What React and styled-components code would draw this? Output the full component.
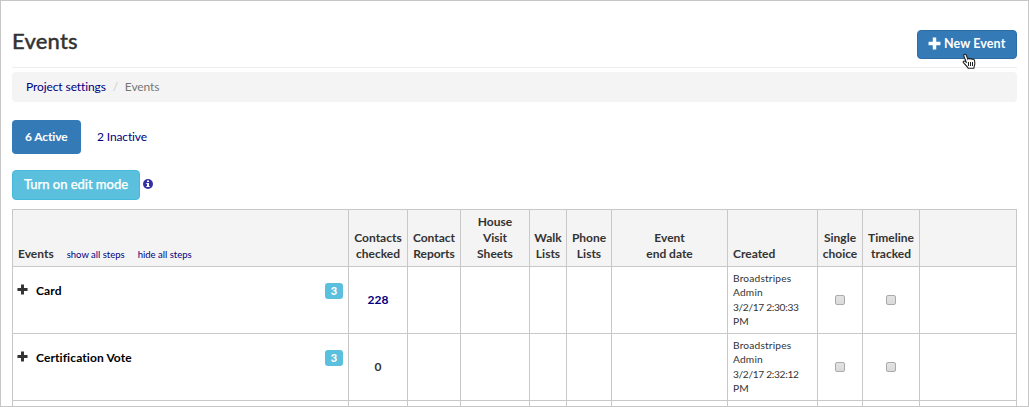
import React from "react";
import styled, { createGlobalStyle } from "styled-components";

const Global = createGlobalStyle`
  *, *::before, *::after { box-sizing: border-box; }
  html, body { margin: 0; height: 407px; overflow: hidden; background: #fff; }
  body { font-family: Lato, "Liberation Sans", sans-serif; font-size: 12px; color: #333; }
`;

const Frame = styled.div`
  width: 1029px;
  height: 407px;
  border: 1px solid #c6c6c6;
  padding: 0 11px;
  overflow: hidden;
`;

const Header = styled.header`
  display: flex;
  justify-content: space-between;
  align-items: flex-start;
  height: 67px;
  padding-top: 29px;
  border-bottom: 1px solid #eee;
`;

const Title = styled.h1`
  margin: -2px 0 0;
  font-size: 22px;
  line-height: 26px;
  font-weight: 500;
  letter-spacing: 0.2px;
  -webkit-text-stroke: 0.35px currentColor;
`;

const NewButton = styled.button`
  position: relative;
  display: flex;
  align-items: center;
  gap: 3px;
  width: 100px;
  height: 29px;
  padding: 0 0 2px 10px;
  border: 1px solid #2e6da4;
  border-radius: 4px;
  background: #337ab7;
  color: #fff;
  font: 700 12.5px/18px Lato, sans-serif;
  letter-spacing: 0.1px;
  white-space: nowrap;
`;

const Pointer = styled.svg`
  position: absolute;
  left: 44px;
  top: 22px;
`;

const Breadcrumb = styled.nav`
  display: flex;
  align-items: center;
  height: 30px;
  margin-top: 4px;
  padding: 0 13px 1px 14px;
  border-radius: 4px;
  background: #f4f4f4;
  font-size: 12px;
  letter-spacing: -0.1px;
`;

const Link = styled.a`
  color: #000080;
`;

const Slash = styled.span`
  width: 19px;
  text-align: center;
  color: #ccc;
`;

const Muted = styled.span`
  color: #777;
`;

const Tabs = styled.div`
  display: flex;
  height: 34px;
  margin-top: 18px;
`;

const Tab = styled.a`
  display: flex;
  align-items: center;
  width: ${(p) => (p.$active ? "69px" : "82px")};
  padding-left: ${(p) => (p.$active ? "13px" : "16px")};
  padding-bottom: 1px;
  border-radius: 4px;
  background: ${(p) => (p.$active ? "#337ab7" : "transparent")};
  color: ${(p) => (p.$active ? "#fff" : "#000080")};
  font-weight: ${(p) => (p.$active ? 700 : 400)};
  letter-spacing: -0.13px;
  white-space: nowrap;
`;

const EditRow = styled.div`
  display: flex;
  align-items: center;
  gap: 3px;
  margin-top: 16px;
`;

const EditButton = styled.button`
  width: 128px;
  height: 30px;
  padding: 0 0 3px;
  border: 1px solid #46b8da;
  border-radius: 4px;
  background: #5bc0de;
  color: #fff;
  font: 500 13px/18px Lato, sans-serif;
  letter-spacing: -0.03px;
  -webkit-text-stroke: 0.25px currentColor;
`;

const Table = styled.div`
  width: 1005px;
  margin-top: 9px;
  border: solid #c8c8c8;
  border-width: 1px 1px 0 0;
`;

const Row = styled.div`
  display: grid;
  grid-template-columns: 336px 59px 53px 69px 37px 45px 116px 90px 45px 57px 97px;
  height: ${(p) => (p.$head ? "57px" : "67px")};
  border-bottom: 1px solid #c8c8c8;
  background: ${(p) => (p.$head ? "#f4f4f4" : "#fff")};
`;

const HeadCell = styled.div`
  display: flex;
  align-items: flex-end;
  justify-content: ${(p) => (p.$left ? "flex-start" : "center")};
  padding: 0 ${(p) => (p.$left ? "5px" : "0")} 4px;
  border-left: 1px solid #c8c8c8;
  font-size: 12px;
  line-height: 16px;
  font-weight: 700;
  text-align: center;
  white-space: pre-line;
`;

const StepsLink = styled.a`
  margin-left: 13px;
  color: #000080;
  font-size: 9.5px;
  line-height: 14px;
  font-weight: 400;
`;

const Cell = styled.div`
  display: flex;
  align-items: center;
  justify-content: center;
  padding-bottom: 2px;
  border-left: 1px solid #c8c8c8;
  font-weight: 700;
  color: ${(p) => (p.$link ? "#000080" : "#333")};
`;

const NameCell = styled(Cell)`
  align-items: flex-start;
  justify-content: flex-start;
  padding: 16px 5px 0 4px;
  color: #000;

  > svg { margin-top: 1px; }
`;

const EventName = styled.span`
  flex: 1;
  margin-left: 8px;
  line-height: 16px;
  letter-spacing: 0.1px;
`;

const Badge = styled.span`
  width: 18px;
  height: 16px;
  border-radius: 3px;
  background: #5bc0de;
  color: #fff;
  font-size: 11px;
  line-height: 15px;
  font-weight: 900;
  text-align: center;
`;

const Created = styled.div`
  padding: 4px 5px 0;
  border-left: 1px solid #c8c8c8;
  font-size: 10.2px;
  line-height: 14.3px;
  letter-spacing: 0.18px;
  white-space: pre-line;
`;

const Stamp = styled.span`
  letter-spacing: -0.32px;
`;

const Check = styled.input`
  appearance: none;
  width: 10px;
  height: 10px;
  margin: 1px 0 0;
  border: 1px solid #aaa;
  border-radius: 2px;
  background: linear-gradient(#e3e3e3, #dadada);
`;

const PlusIcon = ({ size, color }) => (
  <svg width={size} height={size} viewBox="0 0 12 12" fill={color}>
    <path d="M4.4 .5h3.2v3.9H11.5v3.2H7.6v3.9H4.4V7.6H.5V4.4h3.9z" />
  </svg>
);

const InfoIcon = () => (
  <svg width="10" height="12" viewBox="0 0 10 12">
    <circle cx="5" cy="5" r="5" fill="#3232a0" />
    <path fill="#fff" d="M4 1.5h2V3H4zM3.3 4H6v3h.7v1H3.3V7H4V5h-.7z" />
  </svg>
);

const HandPointer = () => (
  <Pointer width="16" height="18" viewBox="0 0 16 18">
    <path
      d="M2.2 1.5c.8-.6 1.7-.2 2.1.7L5.8 6c.3-.9 1.8-.9 2.2 0 .5-.7 1.7-.5 2.1.4.9-.6 2.2-.1 2.4.9l.3 3c.1 1.8-.7 2.6-.9 4.9H6.2C5.4 13.2 3.3 12 1.4 9.7c-.8-1 .2-2.1 1.6-1.4l1.2.8L1.9 3.3c-.3-.7-.2-1.4.3-1.8z"
      fill="#fff" stroke="#222" strokeWidth="1.1"
    />
    <path d="M6.5 9v4M8.5 9v4M10.5 9v4" stroke="#222" strokeWidth="1" />
  </Pointer>
);

const events = [
  { name: "Card", steps: 3, checked: 228, time: "3/2/17 2:30:33" },
  { name: "Certification Vote", steps: 3, checked: 0, time: "3/2/17 2:32:12" },
];

const EventRow = ({ event }) => (
  <Row>
    <NameCell>
      <PlusIcon size={11} color="#333" />
      <EventName>{event.name}</EventName>
      <Badge>{event.steps}</Badge>
    </NameCell>
    <Cell $link={event.checked > 0}>{event.checked}</Cell>
    <Cell /><Cell /><Cell /><Cell /><Cell />
    <Created>
      {"Broadstripes\nAdmin\n"}
      <Stamp>{event.time}</Stamp>
      {"\nPM"}
    </Created>
    <Cell><Check type="checkbox" /></Cell>
    <Cell><Check type="checkbox" /></Cell>
    <Cell />
  </Row>
);

export default function App() {
  return (
    <Frame>
      <Global />
      <Header>
        <Title>Events</Title>
        <NewButton>
          <PlusIcon size={13} color="#fff" />
          New Event
          <HandPointer />
        </NewButton>
      </Header>
      <Breadcrumb>
        <Link>Project settings</Link>
        <Slash>/</Slash>
        <Muted>Events</Muted>
      </Breadcrumb>
      <Tabs>
        <Tab $active>6 Active</Tab>
        <Tab>2 Inactive</Tab>
      </Tabs>
      <EditRow>
        <EditButton>Turn on edit mode</EditButton>
        <InfoIcon />
      </EditRow>
      <Table>
        <Row $head>
          <HeadCell $left>
            Events
            <StepsLink>show all steps</StepsLink>
            <StepsLink>hide all steps</StepsLink>
          </HeadCell>
          <HeadCell>{"Contacts\nchecked"}</HeadCell>
          <HeadCell>{"Contact\nReports"}</HeadCell>
          <HeadCell>{"House\nVisit\nSheets"}</HeadCell>
          <HeadCell>{"Walk\nLists"}</HeadCell>
          <HeadCell>{"Phone\nLists"}</HeadCell>
          <HeadCell>{"Event\nend date"}</HeadCell>
          <HeadCell $left>Created</HeadCell>
          <HeadCell>{"Single\nchoice"}</HeadCell>
          <HeadCell>{"Timeline\ntracked"}</HeadCell>
          <HeadCell />
        </Row>
        {events.map((e) => <EventRow key={e.name} event={e} />)}
        <Row>
          {Array.from({ length: 11 }, (_, i) => <Cell key={i} />)}
        </Row>
      </Table>
    </Frame>
  );
}
